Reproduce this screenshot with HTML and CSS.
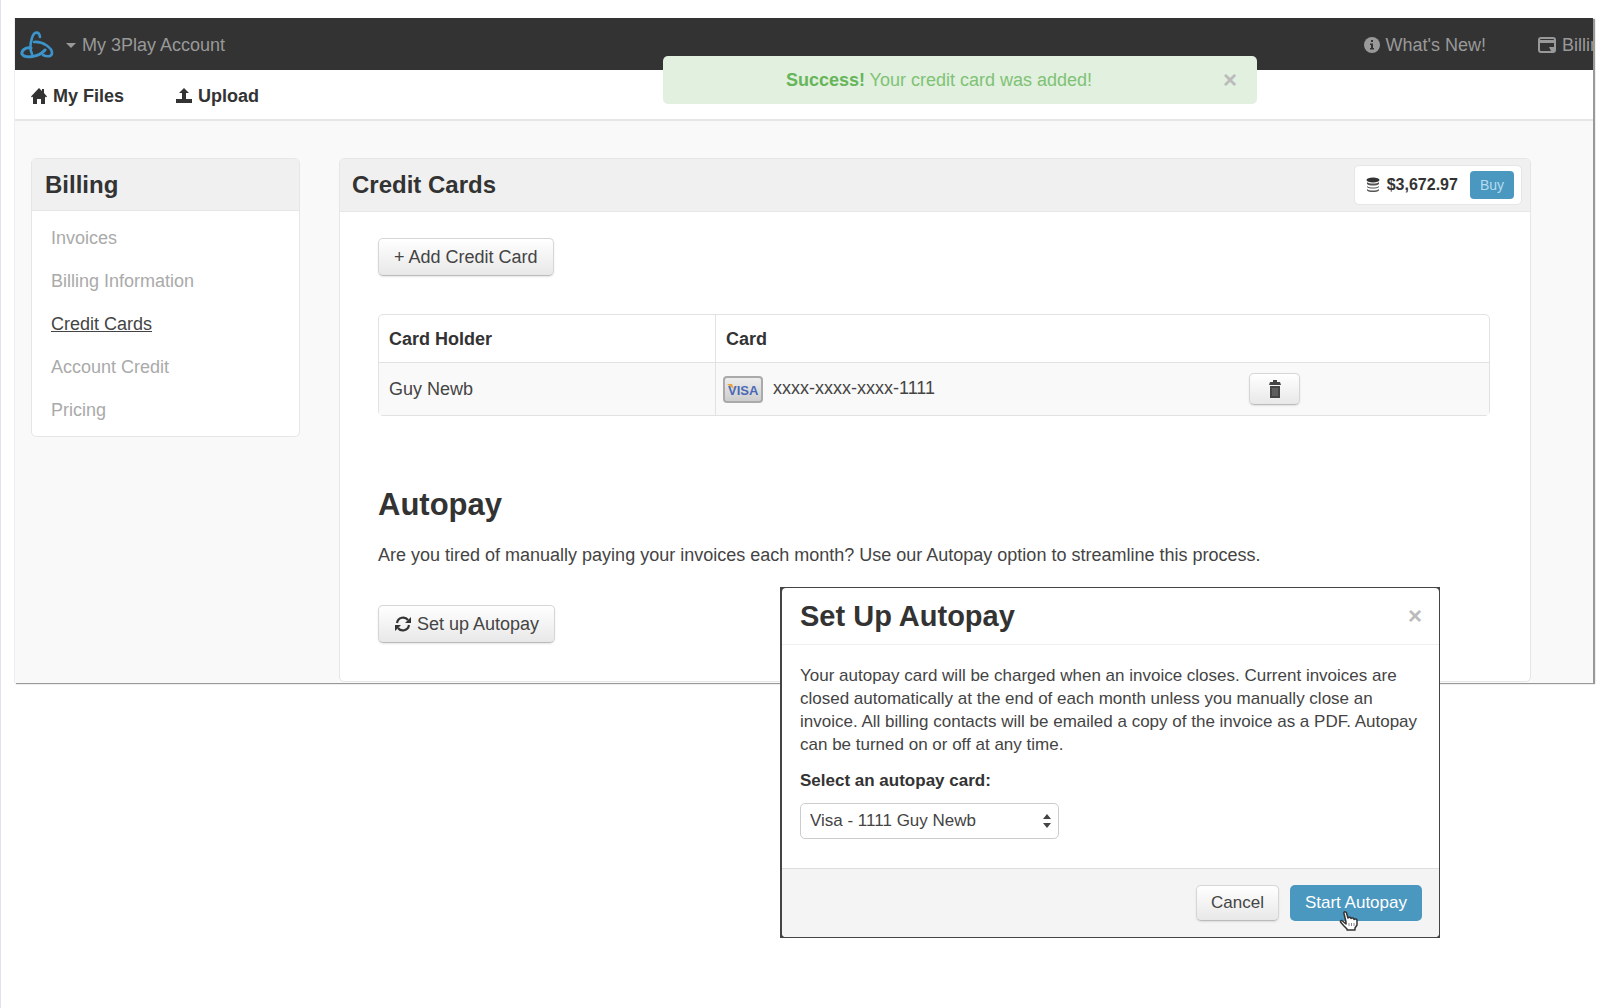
FILE: index.html
```html
<!DOCTYPE html>
<html lang="en">
<head>
    <meta charset="utf-8">
    <title>Credit Cards - My 3Play Account</title>
    <link rel="stylesheet" href="styles.css">
</head>
<body>
    <div class="window">
        <header class="topbar">
            <a href="#" class="logo" aria-label="3Play">
                <svg width="34" height="30" viewBox="0 0 34 30" fill="none" stroke="#3d94cb" stroke-linecap="round">
                    <path d="M20 7C19 1 14 1 12 8c-2 6-2 12 0 16" stroke-width="2.600"/>
                    <path d="M11 18C5 17 1 21 2 24c3 5 17 3 23-4" stroke-width="3"/>
                    <path d="M14 12c9-1 18 6 18 11 0 4-5 4-9 2" stroke-width="2.600"/>
                </svg>
            </a>
            <a href="#" class="account"><span class="caret"></span>My 3Play Account</a>
            <nav class="topbar-right">
                <a href="#">
                    <svg width="16" height="16" viewBox="0 0 16 16"><circle cx="8" cy="8" r="8" fill="#999"/><path d="M6 6.500h3V11h1v1.500H6V11h1V8H6zM7 3h2v2H7z" fill="#333"/></svg>
                    What's New!
                </a>
                <a href="#">
                    <svg width="18" height="16" viewBox="0 0 18 16"><rect x="1" y="1" width="16" height="14" rx="2" fill="none" stroke="#999" stroke-width="2"/><path d="M1 3h16v3H1zM11 10h6v4h-4z" fill="#999"/></svg>
                    Billing
                </a>
            </nav>
        </header>

        <nav class="subnav">
            <a href="#">
                <svg width="16" height="16" viewBox="0 0 16 16" fill="#333"><path d="M8 0l3 3V1h2v4l3 3.500-1 1-1-1V16h-4v-5H6v5H2V8.500l-1 1-1-1z"/></svg>
                My Files
            </a>
            <a href="#">
                <svg width="16" height="16" viewBox="0 0 16 16" fill="#333"><path d="M8 0l5 5h-3v6h6v4H0v-4h6V5H3z"/></svg>
                Upload
            </a>
        </nav>

        <div class="alert" role="alert">
            <p><strong>Success!</strong> Your credit card was added!</p>
            <button type="button" class="close" aria-label="Close">×</button>
        </div>

        <div class="content">
            <aside class="panel sidebar">
                <h2 class="panel-title">Billing</h2>
                <ul class="side-links">
                    <li><a href="#">Invoices</a></li>
                    <li><a href="#">Billing Information</a></li>
                    <li><a href="#" class="active">Credit Cards</a></li>
                    <li><a href="#">Account Credit</a></li>
                    <li><a href="#">Pricing</a></li>
                </ul>
            </aside>

            <main class="panel main">
                <div class="panel-title main-title">
                    <h2>Credit Cards</h2>
                    <div class="balance">
                        <svg width="14" height="16" viewBox="0 0 14 16"><ellipse cx="7" cy="3" rx="6.500" ry="2.500" fill="#333"/><path d="M1 5c2 2 10 2 12 0v2c-2 2-10 2-12 0zM1 9c2 2 10 2 12 0v1c-2 2-10 2-12 0zM1 12c2 2 10 2 12 0v1.500c-2 2-10 2-12 0z" fill="#555"/></svg>
                        <strong>$3,672.97</strong>
                        <button type="button" class="btn-primary btn-small">Buy</button>
                    </div>
                </div>
                <div class="panel-body">
                    <button type="button" class="btn">+ Add Credit Card</button>

                    <table class="cards">
                        <thead>
                            <tr>
                                <th class="col-holder">Card Holder</th>
                                <th>Card</th>
                                <th class="col-action"></th>
                            </tr>
                        </thead>
                        <tbody>
                            <tr>
                                <td>Guy Newb</td>
                                <td class="card-cell">
                                    <div class="card-number">
                                        <svg width="40" height="27" viewBox="0 0 40 27">
                                            <defs><linearGradient id="visa" x2="0" y2="1"><stop stop-color="#eee"/><stop offset="1" stop-color="#ccc"/></linearGradient></defs>
                                            <rect x="1" y="1" width="38" height="25" rx="3" fill="url(#visa)" stroke="#aaa" stroke-width="2"/>
                                            <text x="5" y="19" class="visa-text">VISA</text>
                                            <path d="M4 8h5l2 5z" fill="#e8a33a"/>
                                        </svg>
                                        <span>xxxx-xxxx-xxxx-1111</span>
                                    </div>
                                </td>
                                <td class="col-action">
                                    <button type="button" class="btn btn-trash" aria-label="Delete card">
                                        <svg width="12" height="18" viewBox="0 0 12 18" fill="#444"><path d="M4 0h4v2h3l1 3H0l1-3h3zM1 6h10v12H1z"/><path d="M4 8v8M6 8v8M8 8v8" stroke="#777" stroke-width="1"/></svg>
                                    </button>
                                </td>
                            </tr>
                        </tbody>
                    </table>

                    <h1>Autopay</h1>
                    <p class="intro">Are you tired of manually paying your invoices each month? Use our Autopay option to streamline this process.</p>
                    <button type="button" class="btn">
                        <svg width="18" height="16" viewBox="0 0 18 16"><path d="M3 7c1-6 8-7 11-3M15 9c-1 6-8 7-11 3" fill="none" stroke="#333" stroke-width="2.200"/><path d="M17 1v6h-6zM1 15V9h6z" fill="#333"/></svg>
                        Set up Autopay
                    </button>
                </div>
            </main>
        </div>
    </div>

    <div class="modal-frame">
        <div class="modal" role="dialog" aria-labelledby="modal-title">
            <div class="modal-header">
                <h3 id="modal-title">Set Up Autopay</h3>
                <button type="button" class="close" aria-label="Close">×</button>
            </div>
            <form class="modal-body">
                <p>Your autopay card will be charged when an invoice closes. Current invoices are closed automatically at the end of each month unless you manually close an invoice. All billing contacts will be emailed a copy of the invoice as a PDF. Autopay can be turned on or off at any time.</p>
                <label for="card">Select an autopay card:</label>
                <div class="select-wrap">
                    <select id="card">
                        <option>Visa - 1111 Guy Newb</option>
                    </select>
                    <svg width="8" height="14" viewBox="0 0 8 14" fill="#444"><path d="M4 0l4 5H0zM4 14l4-5H0z"/></svg>
                </div>
            </form>
            <div class="modal-footer">
                <button type="button" class="btn">Cancel</button>
                <button type="button" class="btn-primary">Start Autopay</button>
            </div>
            <svg class="pointer" width="20" height="20" viewBox="0 0 20 20" fill="#fff" stroke="#333" stroke-width="1.500" stroke-linejoin="round">
                <path d="M7 11L5 2.500C4.500 0 7 .5 7.500 2L9 7c1-1 3-1 3 .5 1-1 3-.5 3 1 1-1 3-.5 3 1V14l-2 3v2H8v-1l-3-3-3.500-4c-.5-1 1-2 2-1L7 13z"/>
                <path d="M10 12v3M12.500 12v3M15 12v3" stroke="#888" stroke-width="1"/>
            </svg>
        </div>
    </div>
</body>
</html>
```
FILE: styles.css
```css
* {
    box-sizing: border-box;
}
body {
    margin: 0;
    padding: 18px 19px 18px 13px;
    min-height: 100vh;
    border-left: 1px solid #e2e2ee;
    background: #fff;
    color: #444;
    font: 18px/24px "Liberation Sans", Arial, sans-serif;
}
h1, h2, h3, p, ul {
    margin: 0;
}
h1, h2, h3, strong {
    color: #333;
}
a {
    color: inherit;
    text-decoration: none;
}
svg {
    flex: none;
}
button, select {
    font: inherit;
    color: inherit;
}

/* app window */
.window {
    position: relative;
    overflow: hidden;
    background: #f9f9f9;
    border-left: 1px solid #eee;
    box-shadow: 2px 1px 1px #999;
}
.topbar {
    display: flex;
    align-items: center;
    height: 52px;
    padding: 2px 0 0 5px;
    background: #333;
    color: #999;
}
.logo {
    display: flex;
}
.account {
    display: flex;
    align-items: center;
    margin-left: 12px;
}
.caret {
    margin-right: 6px;
    border: 5px solid transparent;
    border-top-color: #999;
    border-bottom: 0;
}
.topbar-right {
    display: flex;
    gap: 52px;
    margin-left: auto;
    margin-right: -17px; /* last item runs past the window edge */
}
.topbar-right a,
.subnav a {
    display: flex;
    align-items: center;
    gap: 6px;
    white-space: nowrap;
}
.subnav {
    display: flex;
    align-items: center;
    gap: 52px;
    height: 51px;
    padding: 2px 0 0 16px;
    background: #fff;
    border-bottom: 2px solid #e6e6e6;
    color: #333;
    font-weight: bold;
}

.alert {
    position: absolute;
    top: 38px;
    right: 336px;
    display: flex;
    align-items: center;
    width: 594px;
    height: 48px;
    padding-right: 20px;
    background: #e1f0df;
    border-radius: 5px;
    color: #7fc274;
}
.alert p {
    flex: 1;
    padding-right: 8px;
    text-align: center;
}
.alert strong {
    color: #67b559;
}
.close {
    padding: 0;
    border: 0;
    background: none;
    color: #bbb;
    font-size: 24px;
    font-weight: bold;
}

/* layout */
.content {
    display: flex;
    align-items: flex-start;
    gap: 39px;
    padding: 37px 62px 1px 16px;
}
.panel {
    background: #fff;
    border: 1px solid #e6e6e6;
    border-radius: 5px;
}
.sidebar {
    width: 269px;
    flex: none;
}
.main {
    flex: 1;
}
.panel-title {
    padding: 14px 13px;
    background: #f0f0f0;
    border-bottom: 1px solid #e6e6e6;
    border-radius: 4px 4px 0 0;
    font-size: 24px;
}
.sidebar .panel-title {
    padding-bottom: 13px;
}
.panel-title h2 {
    font-size: 24px;
}
.main-title {
    display: flex;
    align-items: center;
    justify-content: space-between;
    height: 53px;
    padding: 0 8px 0 12px;
}
.balance {
    display: flex;
    align-items: center;
    gap: 7px;
    height: 40px;
    padding: 0 7px 0 11px;
    background: #fff;
    border: 1px solid #e6e6e6;
    border-radius: 5px;
    font-size: 16px;
}
.side-links {
    padding: 6px 19px 4px;
    list-style: none;
    line-height: 43px;
    color: #aaa;
}
.side-links .active {
    color: #444;
    text-decoration: underline;
}
.panel-body {
    padding: 26px 40px 38px 38px;
}

/* buttons */
.btn,
.btn-primary {
    display: inline-flex;
    align-items: center;
    justify-content: center;
    gap: 5px;
    height: 38px;
    padding: 0 15px;
    border: 1px solid #d6d6d6;
    border-bottom-color: #bbb;
    border-radius: 5px;
    background: linear-gradient(#fff, #e8e8e8);
    box-shadow: 0 1px 2px rgba(0, 0, 0, 0.1);
}
.btn-primary {
    border: 0;
    background: #4a97bf;
    box-shadow: none;
    color: #fff;
}
.btn-small {
    height: 28px;
    margin-left: 5px;
    padding: 0 10px;
    border-radius: 4px;
    color: #b5dcef;
    font-size: 14px;
}
.btn-trash {
    height: 32px;
    width: 51px;
    padding: 0;
    vertical-align: middle;
}

/* credit card table */
.cards {
    width: 100%;
    margin: 38px 0 69px;
    border: 1px solid #e2e2e2;
    border-radius: 5px;
    border-collapse: separate;
    border-spacing: 0;
    table-layout: fixed;
}
.cards th,
.cards td {
    padding: 0 10px;
    text-align: left;
}
.cards th {
    height: 47px;
    color: #333;
}
.cards td {
    height: 53px;
    background: #f9f9f9;
    border-top: 1px solid #e2e2e2;
}
.cards .col-holder {
    width: 336px;
}
.cards th:nth-child(2),
.cards td:nth-child(2) {
    border-left: 1px solid #e2e2e2;
}
.cards .card-cell {
    padding-left: 7px;
}
.cards .col-action {
    width: 240px;
    padding: 0;
}
.card-number {
    display: flex;
    gap: 10px;
}
.visa-text {
    fill: #4a69b5;
    font-size: 13px;
    font-weight: bold;
}
h1 {
    font-size: 31px;
    line-height: 40px;
}
.intro {
    margin: 18px 0 38px;
}

/* autopay dialog */
.modal-frame {
    position: absolute;
    top: 587px;
    left: 780px;
    width: 660px;
    padding: 1px 1px 1px 2px;
    background: #444;
    font-size: 17px;
}
.modal {
    position: relative;
    background: #fff;
    border-radius: 4px;
}
.modal-header {
    display: flex;
    align-items: center;
    justify-content: space-between;
    height: 57px;
    padding: 0 17px 0 18px;
    border-bottom: 1px solid #eee;
}
.modal-header h3 {
    font-size: 29px;
}
.modal-body {
    padding: 19px 18px 29px;
}
.modal-body p {
    margin-bottom: 13px;
    line-height: 23px;
}
.modal-body label {
    display: block;
    margin-bottom: 10px;
    color: #333;
    font-weight: bold;
}
.select-wrap {
    position: relative;
    width: 259px;
}
.select-wrap svg {
    position: absolute;
    top: 11px;
    right: 8px;
    pointer-events: none;
}
.select-wrap select {
    display: block;
    width: 100%;
    height: 36px;
    padding: 0 9px;
    border: 1px solid #ccc;
    border-radius: 5px;
    background: #fff;
    appearance: none;
}
.modal-footer {
    display: flex;
    justify-content: flex-end;
    gap: 11px;
    padding: 16px 17px;
    background: #f4f4f4;
    border-top: 1px solid #ddd;
    border-radius: 0 0 4px 4px;
}
.modal-footer button {
    height: 36px;
}
.modal-footer .btn {
    padding: 0 14px;
}
.pointer {
    position: absolute;
    right: 80px;
    bottom: 6px;
}
```
